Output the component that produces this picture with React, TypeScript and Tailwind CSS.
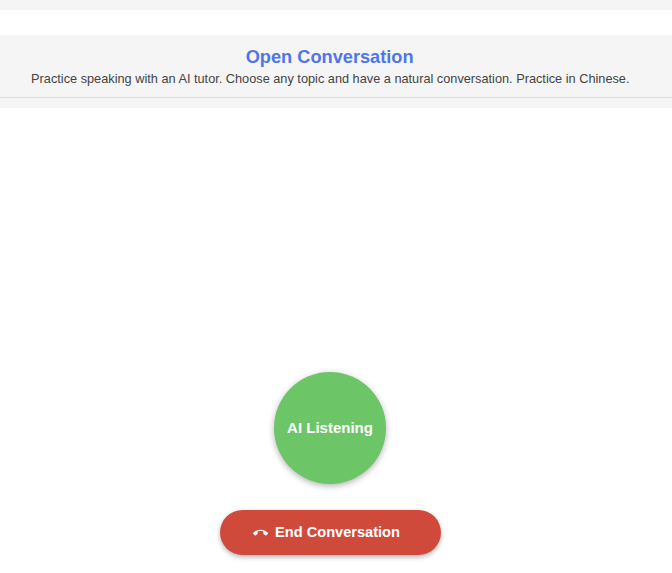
import React from 'react';

const CallEndIcon = () => (
  <svg width="15" height="16" viewBox="0 0 24 24" preserveAspectRatio="none" fill="currentColor" aria-hidden="true">
    <path d="M12 9c-1.6 0-3.15.25-4.6.72v3.1c0 .39-.23.74-.56.9-.98.49-1.87 1.12-2.66 1.85-.18.18-.43.28-.7.28-.28 0-.53-.11-.71-.29L.29 13.08c-.18-.17-.29-.42-.29-.7 0-.28.11-.53.29-.71C3.34 8.78 7.46 7 12 7s8.66 1.78 11.71 4.67c.18.18.29.43.29.71 0 .28-.11.53-.29.71l-2.48 2.48c-.18.18-.43.29-.71.29-.27 0-.52-.11-.7-.28-.79-.74-1.69-1.36-2.67-1.85-.33-.16-.56-.5-.56-.9v-3.1C15.15 9.25 13.6 9 12 9z" />
  </svg>
);

const App = () => {
  return (
    <div className="h-[573px] w-[672px] overflow-hidden bg-white font-['Liberation_Sans',Arial,sans-serif]">
      <div className="h-[10px] bg-[#f5f5f5]" />
      <div className="h-[25px] bg-white" />
      <div className="h-[73px] bg-[#f5f5f5]">
        <div className="flex h-[62px] w-[660px] flex-col items-center pt-[10px]">
          <h1 className="scale-x-[0.958] text-[19px] leading-[24px] font-bold text-[#4f75e8]">Open Conversation</h1>
          <p className="mt-[1px] scale-x-[0.958] text-[13.3px] leading-[18px] text-[#444444]">
            Practice speaking with an AI tutor. Choose any topic and have a natural conversation. Practice in Chinese.
          </p>
        </div>
        <div className="h-px bg-[#dddddd]" />
      </div>
      <div className="flex w-[660px] flex-col items-center pt-[264px]">
        <div className="flex h-[112px] w-[112px] items-center justify-center rounded-full bg-[#6cc566] shadow-[0_2px_6px_rgba(0,0,0,0.3)]">
          <span className="text-[15px] font-bold whitespace-nowrap text-white">AI Listening</span>
        </div>
        <button className="mt-[26px] flex h-[45px] w-[221px] items-center justify-center gap-[7px] rounded-full bg-[#d04a3c] pr-[7px] text-[14.6px] font-bold text-white shadow-[0_2px_5px_rgba(0,0,0,0.3)]">
          <CallEndIcon />
          <span className="whitespace-nowrap">End Conversation</span>
        </button>
      </div>
    </div>
  );
};

export default App;
